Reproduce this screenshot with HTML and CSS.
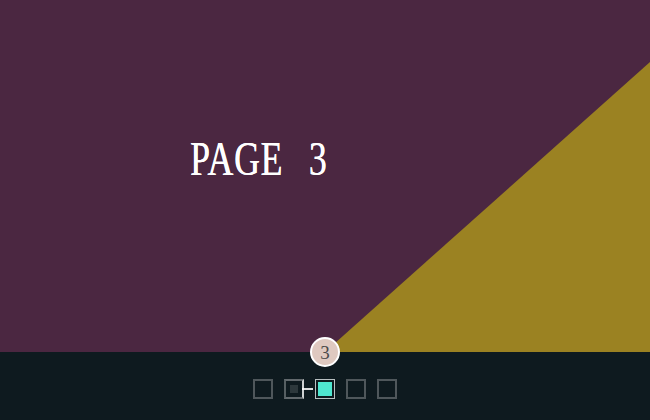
FILE: index.html
```html
<!DOCTYPE html>
<html lang="en">
<head>
<meta charset="utf-8">
<title>Page 3</title>
<link rel="stylesheet" href="styles.css">
</head>
<body>
<div class="app">
  <section class="slide">
    <div class="wedge"></div>
    <h1 class="title">PAGE 3</h1>
  </section>
  <nav class="pager">
    <span class="badge">3</span>
    <div class="dots">
      <span class="dot"></span>
      <span class="dot prev"></span>
      <span class="dot active"></span>
      <span class="dot"></span>
      <span class="dot"></span>
    </div>
  </nav>
</div>
</body>
</html>
```
FILE: styles.css
```css
html, body {
  margin: 0;
  padding: 0;
  width: 650px;
  height: 420px;
  overflow: hidden;
  background: #0e1a1f;
}
.app {
  display: flex;
  flex-direction: column;
  width: 650px;
  height: 420px;
}
.slide {
  position: relative;
  height: 352px;
  background: #4b2741;
  overflow: hidden;
  padding: 134px 0 0 190px;
  box-sizing: border-box;
}
.wedge {
  position: absolute;
  inset: 0;
  background: #9b8222;
  clip-path: polygon(100% 17.6%, 100% 100%, 50% 100%);
}
.title {
  position: relative;
  margin: 0;
  display: inline-block;
  font-family: "Liberation Serif", "Times New Roman", serif;
  font-weight: normal;
  font-size: 49px;
  line-height: 49px;
  color: #ffffff;
  letter-spacing: 1px;
  word-spacing: 22px;
  transform: scaleX(0.73);
  transform-origin: left top;
  text-shadow: 0.4px 0 0 #ffffff;
}
.pager {
  position: relative;
  flex: 1;
  background: #0e1a1f;
  display: flex;
  justify-content: center;
  padding-top: 27px;
  box-sizing: border-box;
}
.badge {
  position: absolute;
  left: 310px;
  top: -15px;
  width: 26px;
  height: 26px;
  border: 2px solid #ffffff;
  border-radius: 50%;
  background: #dfc9c0;
  color: #4a4a4a;
  font-family: "Liberation Serif", serif;
  font-size: 19px;
  line-height: 27px;
  text-align: center;
}
.dots {
  display: flex;
  gap: 11px;
  height: 20px;
}
.dot {
  position: relative;
  width: 20px;
  height: 20px;
  box-sizing: border-box;
  border: 2px solid rgba(255, 255, 255, 0.27);
}
.dot.prev {
  display: flex;
  align-items: center;
  justify-content: center;
  border-color: rgba(255, 255, 255, 0.35) rgba(255, 255, 255, 0.8) rgba(255, 255, 255, 0.35) rgba(255, 255, 255, 0.3);
}
.dot.prev::before {
  content: "";
  width: 8px;
  height: 8px;
  background: #2d383c;
}
.dot.prev::after {
  content: "";
  position: absolute;
  left: 100%;
  top: 7px;
  width: 11px;
  height: 2px;
  background: rgba(255, 255, 255, 0.85);
}
.dot.active {
  border: 1px solid #b9c0c2;
  background: #4fe6d0;
  box-shadow: inset 0 0 0 2px #0e1a1f;
}
```
